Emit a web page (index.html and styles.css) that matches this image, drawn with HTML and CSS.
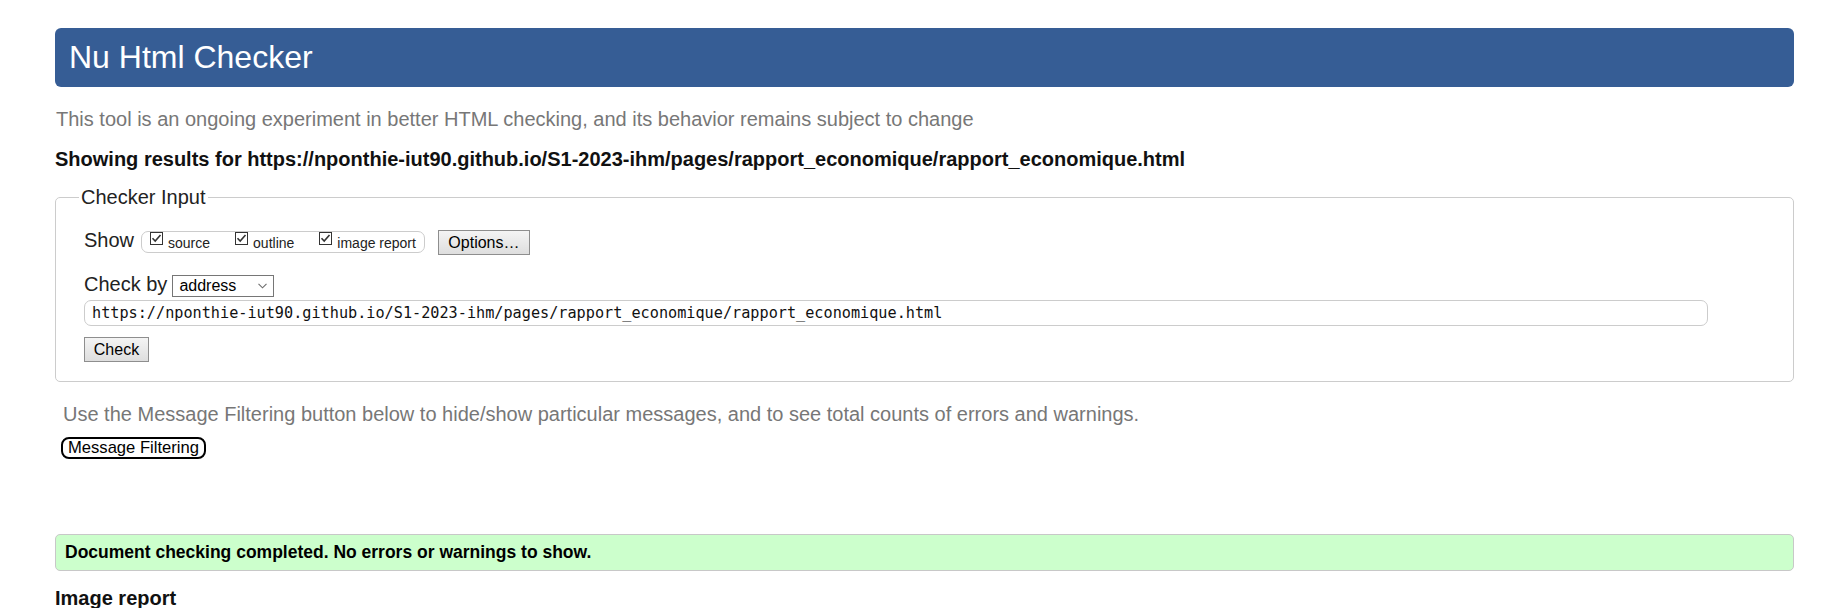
FILE: index.html
```html
<!DOCTYPE html>
<html lang="en">
<head>
<meta charset="utf-8">
<title>Nu Html Checker</title>
<link rel="stylesheet" href="styles.css">
</head>
<body>
<h1 class="title">Nu Html Checker</h1>
<p class="intro">This tool is an ongoing experiment in better HTML checking, and its behavior remains subject to change</p>
<p class="showing">Showing results for https://nponthie-iut90.github.io/S1-2023-ihm/pages/rapport_economique/rapport_economique.html</p>
<fieldset class="input-box">
  <legend class="legend">Checker Input</legend>
  <div class="row row-show">
    <span class="label">Show</span>
    <span class="checkgroup">
      <span class="opt">
        <svg class="cb" width="13" height="13" viewBox="0 0 13 13"><rect x="0.5" y="0.5" width="12" height="12" fill="#fff" stroke="#333"/><polyline points="2.5,6.2 5.2,9 10.5,3" fill="none" stroke="#333" stroke-width="1.6"/></svg>
        <span class="opt-text">source</span>
      </span>
      <span class="opt">
        <svg class="cb" width="13" height="13" viewBox="0 0 13 13"><rect x="0.5" y="0.5" width="12" height="12" fill="#fff" stroke="#333"/><polyline points="2.5,6.2 5.2,9 10.5,3" fill="none" stroke="#333" stroke-width="1.6"/></svg>
        <span class="opt-text">outline</span>
      </span>
      <span class="opt">
        <svg class="cb" width="13" height="13" viewBox="0 0 13 13"><rect x="0.5" y="0.5" width="12" height="12" fill="#fff" stroke="#333"/><polyline points="2.5,6.2 5.2,9 10.5,3" fill="none" stroke="#333" stroke-width="1.6"/></svg>
        <span class="opt-text">image report</span>
      </span>
    </span>
    <span class="btn btn-options">Options…</span>
  </div>
  <div class="row row-by">
    <span class="label">Check by</span>
    <span class="select">
      <span class="select-text">address</span>
      <svg class="chev" width="9" height="6" viewBox="0 0 9 6"><polyline points="0.5,0.8 4.5,4.8 8.5,0.8" fill="none" stroke="#6d6d6d" stroke-width="1.1"/></svg>
    </span>
  </div>
  <div class="url">https://nponthie-iut90.github.io/S1-2023-ihm/pages/rapport_economique/rapport_economique.html</div>
  <div class="row row-check"><span class="btn btn-check">Check</span></div>
</fieldset>
<p class="filter-note">Use the Message Filtering button below to hide/show particular messages, and to see total counts of errors and warnings.</p>
<div class="filter-row"><span class="btn-filter">Message Filtering</span></div>
<div class="success">Document checking completed. No errors or warnings to show.</div>
<h2 class="section">Image report</h2>
</body>
</html>
```
FILE: styles.css
```css
html, body {
  margin: 0;
  background: #fff;
}
body {
  padding: 28px 52px 0 55px;
  font-family: "Liberation Sans", Arial, sans-serif;
  font-size: 20px;
  color: #222;
  overflow: hidden;
}
.title {
  margin: 0;
  height: 59px;
  line-height: 59px;
  padding: 0 14px;
  font-size: 32px;
  font-weight: normal;
  color: #fff;
  background: #365d95;
  border-radius: 6px;
}
.intro {
  margin: 21px 0 0 1px;
  line-height: 23px;
  color: #777;
}
.showing {
  margin: 17px 0 0 0;
  line-height: 23px;
  font-weight: bold;
  color: #111;
}
.input-box {
  margin: 15px 0 0 0;
  padding: 0 28px 19px 28px;
  border: 1px solid #cccccc;
  border-radius: 5px;
  min-width: 0;
}
.legend {
  margin-left: -5px;
  padding: 0 2px;
  line-height: 23px;
  color: #222;
}
.row {
  display: flex;
  align-items: flex-start;
}
.row-show {
  margin-top: 20px;
}
.label {
  line-height: 23px;
}
.checkgroup {
  display: flex;
  align-items: flex-start;
  gap: 25px;
  margin: 2px 0 0 7px;
  height: 20px;
  padding: 0 8px 0 8px;
  border: 1px solid #cccccc;
  border-radius: 7px;
}
.opt {
  display: flex;
  align-items: flex-start;
  gap: 5px;
}
.cb {
  display: block;
  margin-top: 0;
}
.opt-text {
  font-size: 14px;
  line-height: 16px;
  margin-top: 3px;
}
.btn {
  display: inline-block;
  box-sizing: border-box;
  font-size: 16px;
  line-height: 23px;
  color: #000;
  border: 1px solid #8e8e8e;
  background: linear-gradient(#f4f4f4, #dedede);
  text-align: center;
}
.btn-options {
  margin: 1px 0 0 13px;
  width: 92px;
  height: 25px;
}
.row-by {
  margin-top: 18px;
}
.select {
  display: flex;
  align-items: center;
  box-sizing: border-box;
  width: 102px;
  height: 22px;
  margin: 2px 0 0 5px;
  padding: 0 5px 0 6px;
  border: 1px solid #767676;
  background: #fff;
  font-size: 16px;
  color: #000;
}
.select-text {
  flex: 1;
  line-height: 20px;
}
.chev {
  display: block;
  margin-right: 1px;
}
.url {
  box-sizing: border-box;
  width: 1624px;
  height: 26px;
  margin-top: 3px;
  padding: 0 7px;
  border: 1px solid #cccccc;
  border-radius: 7px;
  font-family: "DejaVu Sans Mono", "Liberation Mono", monospace;
  font-size: 15.2px;
  line-height: 25px;
  color: #111;
  white-space: nowrap;
}
.row-check {
  margin-top: 11px;
}
.btn-check {
  width: 65px;
  height: 25px;
}
.filter-note {
  margin: 21px 0 0 8px;
  line-height: 23px;
  color: #777;
}
.filter-row {
  display: flex;
  margin: 11px 0 0 6px;
}
.btn-filter {
  box-sizing: border-box;
  height: 22px;
  padding: 0 5px;
  border: 2px solid #000;
  border-radius: 8px;
  font-size: 16.6px;
  line-height: 18px;
  color: #000;
  background: #fff;
}
.success {
  margin-top: 75px;
  height: 37px;
  box-sizing: border-box;
  padding: 0 9px;
  border: 1px solid #c8c8c8;
  border-radius: 5px;
  background: #ccffcc;
  font-size: 17.5px;
  font-weight: bold;
  line-height: 35px;
  color: #000;
}
.section {
  margin: 16px 0 0 0;
  font-size: 20px;
  line-height: 23px;
  font-weight: bold;
  color: #111;
}
```
